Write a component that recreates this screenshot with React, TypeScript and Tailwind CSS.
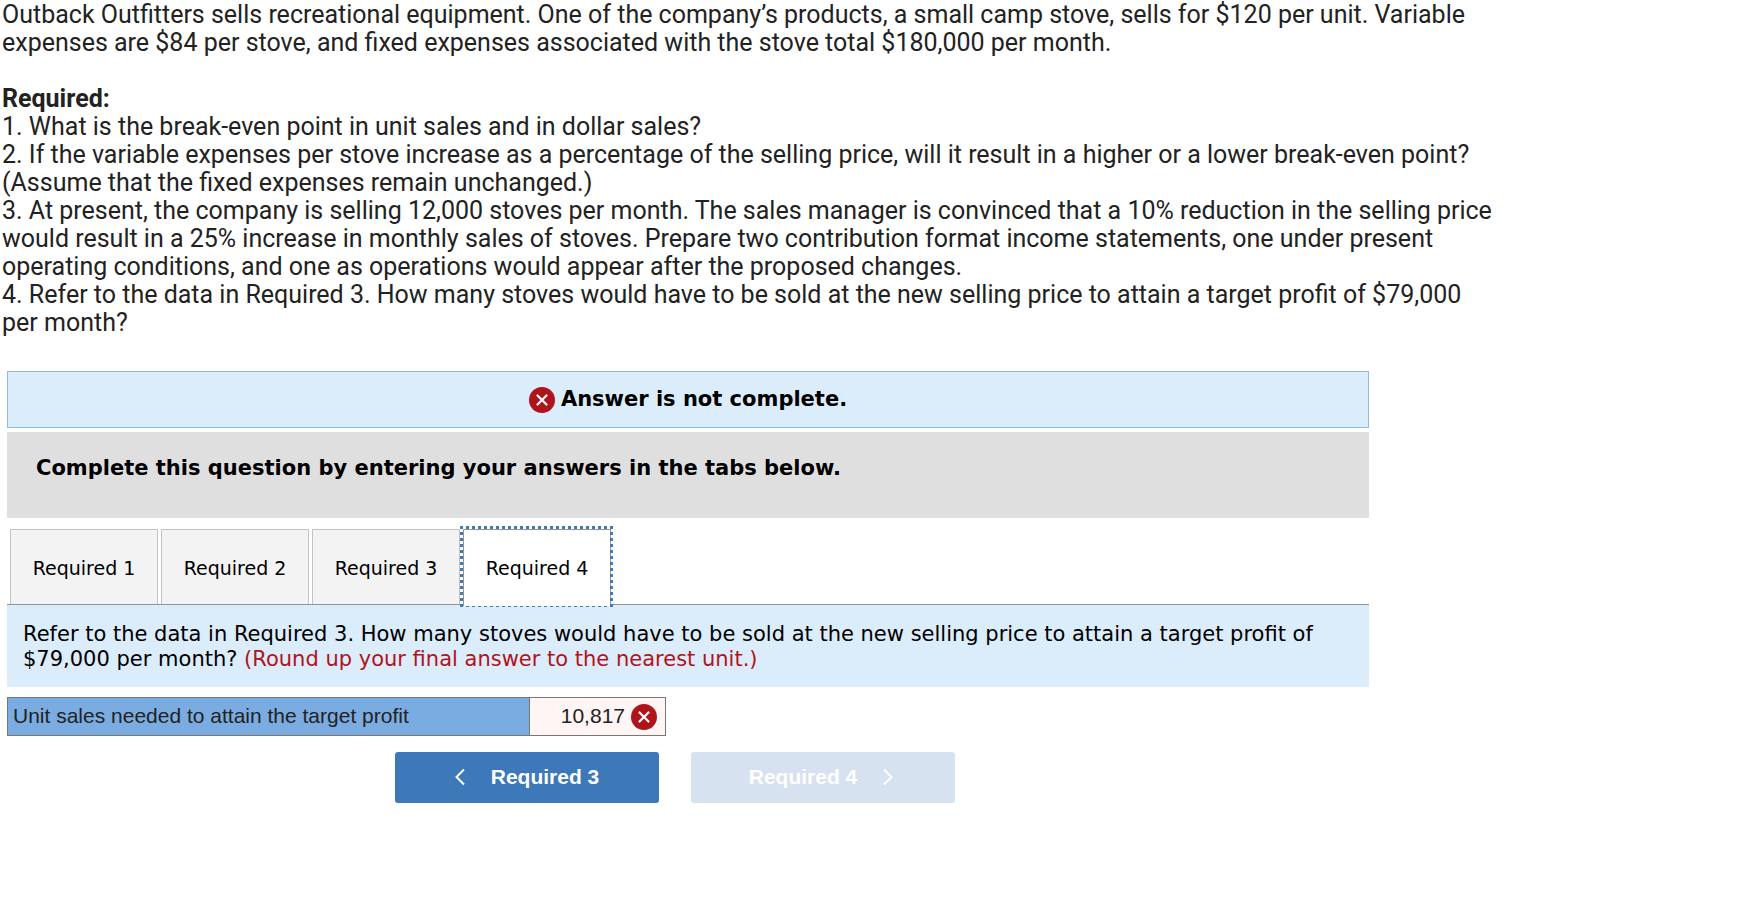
import React, { useState } from 'react';

const tabs = ['Required 1', 'Required 2', 'Required 3', 'Required 4'];

const WrongIcon: React.FC = () => (
  <svg viewBox="0 0 26 26" className="h-[26px] w-[26px] shrink-0" aria-hidden="true">
    <circle cx="13" cy="13" r="13" fill="#b0141b" />
    <path d="M8.5 8.5l9 9M17.5 8.5l-9 9" stroke="#fff" strokeWidth="2.2" strokeLinecap="round" />
  </svg>
);

const Chevron: React.FC<{ direction: 'left' | 'right' }> = ({ direction }) => (
  <svg
    viewBox="0 0 10 18"
    className="h-[18px] w-2.5 shrink-0"
    fill="none"
    stroke="currentColor"
    strokeWidth="2"
    aria-hidden="true"
  >
    <path d={direction === 'left' ? 'M9 1.5L1.5 9L9 16.5' : 'M1 1.5L8.5 9L1 16.5'} />
  </svg>
);

const FocusRing: React.FC = () => (
  <svg
    viewBox="0 0 153 81"
    className="pointer-events-none absolute -top-1 -left-1 h-[81px] w-[153px]"
    stroke="#3d7bbf"
    strokeDasharray="3 3"
    strokeWidth="3"
    shapeRendering="crispEdges"
    aria-hidden="true"
  >
    <path d="M0 1.5H153" />
    <path d="M1.5 0V81" />
    <path d="M151.5 0V81" />
    <path d="M0 80.5H153" strokeWidth="1" />
  </svg>
);

const Question: React.FC = () => (
  <section className="max-w-[1500px] pt-px pl-0.5 font-[Roboto,sans-serif] text-[25px] leading-7 text-[#222]">
    <p>
      Outback Outfitters sells recreational equipment. One of the company’s products, a small camp stove, sells for $120
      per unit. Variable expenses are $84 per stove, and fixed expenses associated with the stove total $180,000 per
      month.
    </p>
    <h2 className="mt-7 font-bold">Required:</h2>
    <p>1. What is the break-even point in unit sales and in dollar sales?</p>
    <p>
      2. If the variable expenses per stove increase as a percentage of the selling price, will it result in a higher or
      a lower break-even point? (Assume that the fixed expenses remain unchanged.)
    </p>
    <p>
      3. At present, the company is selling 12,000 stoves per month. The sales manager is convinced that a 10% reduction
      in the selling price would result in a 25% increase in monthly sales of stoves. Prepare two contribution format
      income statements, one under present operating conditions, and one as operations would appear after the proposed
      changes.
    </p>
    <p>
      4. Refer to the data in Required 3. How many stoves would have to be sold at the new selling price to attain a
      target profit of $79,000 per month?
    </p>
  </section>
);

export default function App() {
  const [active, setActive] = useState(3);
  const [units, setUnits] = useState('10,817');

  return (
    <main className="bg-white pb-8">
      <Question />

      <div className="mt-[34px] ml-[7px] max-w-[1362px] font-['DejaVu_Sans',Verdana,sans-serif] text-black">
        {/* Result banner */}
        <div className="flex h-[57px] items-center justify-center gap-1.5 border border-[#95b9dc] bg-[#dbecfa] text-[21px] font-bold">
          <WrongIcon />
          <span>Answer is not complete.</span>
        </div>

        <div className="mt-1 h-[86px] bg-[#dfdfdf] px-[29px] pt-[22px] text-[21px] leading-7 font-bold">
          Complete this question by entering your answers in the tabs below.
        </div>

        {/* Tabs */}
        <div
          role="tablist"
          className="mt-[11px] flex h-[76px] items-start gap-[3px] border-b border-[#949494] pl-[3px]"
        >
          {tabs.map((tab, i) => (
            <button
              key={tab}
              role="tab"
              aria-selected={active === i}
              onClick={() => setActive(i)}
              className={`relative w-[148px] border border-b-0 text-[19px] outline-none ${
                active === i
                  ? 'h-[77px] border-[#949494] bg-white'
                  : 'h-[75px] border-[#c3c3c3] bg-[#f3f3f3] pt-0.5'
              }`}
            >
              {tab}
              {active === i && <FocusRing />}
            </button>
          ))}
        </div>

        <div role="tabpanel">
          <p className="h-[82px] bg-[#dbecfa] px-4 pt-[17px] text-[21px] leading-[25px]">
            Refer to the data in Required 3. How many stoves would have to be sold at the new selling price to attain a
            target profit of $79,000 per month?{' '}
            <span className="text-[#b0141b]">(Round up your final answer to the nearest unit.)</span>
          </p>

          <table className="mt-2.5 border-collapse font-['Liberation_Sans',Arial,sans-serif] text-[21px] leading-7 text-[#222]">
            <tbody>
              <tr className="h-[38px]">
                <th
                  scope="row"
                  className="w-[522px] border border-[#777] bg-[#7aace2] px-[5px] pb-0.5 text-left font-normal"
                >
                  <label htmlFor="units">Unit sales needed to attain the target profit</label>
                </th>
                <td className="w-[136px] border border-[#777] bg-[#fff5f4]">
                  <div className="flex items-center gap-1.5 pr-2">
                    <input
                      id="units"
                      value={units}
                      onChange={(e) => setUnits(e.target.value)}
                      className="w-full min-w-0 bg-transparent pb-0.5 text-right outline-none"
                    />
                    <WrongIcon />
                  </div>
                </td>
              </tr>
            </tbody>
          </table>
        </div>

        {/* Previous / next */}
        <div className="mt-4 flex gap-8 pl-[388px] font-['Liberation_Sans',Arial,sans-serif] text-[21px] font-bold text-white">
          <button
            onClick={() => setActive(2)}
            className="flex h-[51px] w-[264px] items-center justify-center gap-[26px] rounded-[3px] bg-[#3d78b8] pb-0.5"
          >
            <Chevron direction="left" />
            Required 3
          </button>
          <button
            disabled
            className="flex h-[51px] w-[264px] items-center justify-center gap-[26px] rounded-[3px] bg-[#d7e2f0] pr-1 pb-0.5"
          >
            Required 4
            <Chevron direction="right" />
          </button>
        </div>
      </div>
    </main>
  );
}
